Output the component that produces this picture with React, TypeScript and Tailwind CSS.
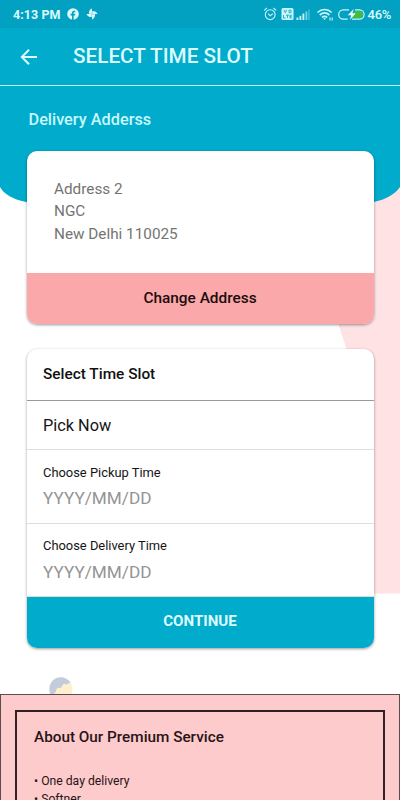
import type { ReactNode } from "react";

const address = ["Address 2", "NGC", "New Delhi 110025"];
const services = ["One day delivery", "Softner"];

function StatusBar() {
  return (
    <div className="flex h-7 items-center bg-[#03a1c1] pl-[13px] pr-[9px] text-[#dcfbff]">
      <span className="text-[12.5px] font-bold leading-[29px] tracking-[0.05px]">4:13 PM</span>
      <svg className="ml-[6px]" width="12" height="12" viewBox="0 0 12 12">
        <circle cx="6" cy="6" r="5.8" fill="#dcfbff" />
        <path d="M5 12V7.5H3.5V5.8H5V4.7C5 3.1 6 2.4 8.3 2.7v1.5h-.8c-.7 0-.9.3-.9.8v.8h1.7L8 7.5H6.6V12Z" fill="#03a1c1" />
      </svg>
      <svg className="ml-[7px]" width="12" height="12" viewBox="0 0 12 12" fill="#dcfbff">
        <path d="M6 .5v5.2H2.9C2.9 3 4 1.2 6 .5ZM11.5 6H6.3V2.9c2.7 0 4.5 1.1 5.2 3.1ZM6 11.5V6.3h3.1c0 2.7-1.1 4.5-3.1 5.2ZM.5 6h5.2v3.1C3 9.1 1.2 8 .5 6Z" />
      </svg>
      <div className="flex-1" />
      <svg width="102" height="16" viewBox="0 0 102 16" fill="none" stroke="#c9f6fb" strokeWidth="1.1">
        <circle cx="7.2" cy="8.7" r="4.9" />
        <path d="M1.2 4.4 4 2M13.2 4.4 10.4 2M5 7.7l2.2 2.1 2.6-2" />
        <rect x="18.5" y="2" width="12" height="12" rx="1.5" fill="#c9f6fb" stroke="none" />
        <path d="m21 3.8 1.3 3 1.3-3M26 4.1h2v2.6h-2ZM20.5 9v3h2M23 9.2h3M24.5 9.2V12M29 9.2h-2V12h2M27 10.6h1.7" stroke="#03a1c1" strokeWidth=".8" />
        <g stroke="none" fill="#c9f6fb">
          <rect x="33.5" y="11.5" width="1.8" height="2.5" />
          <rect x="36.5" y="9.8" width="1.8" height="4.2" />
          <rect x="39.5" y="7.5" width="1.8" height="6.5" />
          <rect x="42.5" y="5.5" width="1.8" height="8.5" opacity=".6" />
          <rect x="45.3" y="3.5" width="1.4" height="10.5" opacity=".35" />
        </g>
        <path d="M54.5 6.5c4.2-4 10-4 14.2 0M56.8 9c3-2.7 6.6-2.7 9.6 0M59 11.4c1.7-1.4 3.5-1.4 5.2 0" strokeWidth="1.7" />
        <path d="m60 12.2 1.6 1.8 1.6-1.8Z" fill="#c9f6fb" stroke="none" />
        <path d="M67 11.5v3M69.2 11.5v3" />
        <path d="M86 3.8h-5.6a4.7 4.7 0 0 0 0 9.4h4.3M92 3.8h4.4a4.7 4.7 0 0 1 0 9.4H89" strokeWidth="1.2" />
        <path d="M91.5 5h4.9a3.5 3.5 0 0 1 0 7H89Z" fill="#43bd3d" stroke="none" />
        <path d="m90.7 3-6 6.2h3.5L86.9 14l5.8-6.8h-3.3Z" fill="#e5ffff" stroke="none" />
      </svg>
      <span className="ml-[2.5px] text-[13px] font-medium leading-[29px] tracking-[-0.3px]">46%</span>
    </div>
  );
}

function Card({ children }: { children: ReactNode }) {
  return (
    <div className="overflow-hidden rounded-[10px] bg-white shadow-[0_1px_3px_rgba(0,0,0,0.4)]">
      {children}
    </div>
  );
}

function DateField({ label }: { label: string }) {
  return (
    <div className="h-[73.5px] border-b border-[#dedede] px-[16.5px] pt-[12.5px]">
      <div className="text-[12.9px] leading-[20px] text-[#151515]">{label}</div>
      <div className="mt-[3.5px] text-[17.2px] leading-[24px] text-[#949494]">YYYY/MM/DD</div>
    </div>
  );
}

export default function App() {
  return (
    <main className="relative isolate flex h-[800px] w-full flex-col overflow-hidden bg-white font-['Roboto',sans-serif]">
      {/* decorative shapes behind the cards */}
      <svg className="absolute inset-0 -z-10" width="400" height="800" viewBox="0 0 400 800">
        <path d="M300 180h100v413.5H365V400C357 382 348 353 338 323Z" fill="#fee2e4" />
        <path d="M0 0h400v187C395 194 387 199 374 202C320 217 80 217 26 202C12 199 4 194 0 187Z" fill="#01abcb" />
        <circle cx="61" cy="689" r="11.5" fill="#fff0cd" />
        <path d="M50 694c-4-17 14-22 21-11-3-1-3 3-6 1-3-1-2 4-5 4-1-1-4 0-4 3-1 3-3 4-6 3Z" fill="#c3ccda" />
      </svg>

      <StatusBar />
      <header className="flex h-[58px] shrink-0 items-center border-b-[1.5px] border-[#b8f2fa] pl-[20px] text-[#dcfbff]">
        <svg width="18" height="18" viewBox="0 0 18 18" fill="none" stroke="currentColor" strokeWidth="2">
          <path d="M17 9H2M9 1.8 1.8 9 9 16.2" />
        </svg>
        <h1 className="ml-[35px] mt-[-1px] text-[20.7px] font-medium leading-[28px]">SELECT TIME SLOT</h1>
      </header>

      <section className="px-[26.5px] pt-[22px]">
        <h2 className="pl-[2px] text-[16.3px] font-medium leading-[23px] text-[#c8f7fc]">Delivery Adderss</h2>
        <div className="mt-[19.5px]">
          <Card>
            <div className="h-[122.5px] pl-[27.5px] pt-[27px] text-[15.3px] leading-[22.6px] text-[#747474]">
              {address.map((line) => (
                <div key={line}>{line}</div>
              ))}
            </div>
            <button className="block h-[51px] w-full bg-[#fba8aa] text-[15.4px] font-medium text-[#210c0e]">
              Change Address
            </button>
          </Card>
        </div>

        <div className="mt-[25px]">
          <Card>
            <div className="h-[51.5px] border-b border-[#999] px-[16.5px] text-[15.4px] font-medium leading-[50px] text-[#111]">
              Select Time Slot
            </div>
            <div className="h-[49.5px] border-b border-[#dedede] px-[16.5px] text-[16.3px] leading-[50px] text-[#151515]">
              Pick Now
            </div>
            <DateField label="Choose Pickup Time" />
            <DateField label="Choose Delivery Time" />
            <button className="block h-[50.5px] w-full bg-[#01abcb] pb-[2px] text-[15.1px] font-bold text-[#dcfbff]">
              CONTINUE
            </button>
          </Card>
        </div>
      </section>

      <section className="mt-[46.5px] h-[200px] shrink-0 border border-[#5e4b4c] bg-[#fdcbcc] px-[14px] pt-[15px]">
        <div className="h-[180px] border-2 border-[#321f21] pl-[17px] pt-[14px] text-[#281416]">
          <h2 className="text-[15.3px] font-medium leading-[22px]">About Our Premium Service</h2>
          <ul className="mt-[24px] text-[12.2px] leading-[18px]">
            {services.map((service) => (
              <li key={service}>• {service}</li>
            ))}
          </ul>
        </div>
      </section>
    </main>
  );
}
